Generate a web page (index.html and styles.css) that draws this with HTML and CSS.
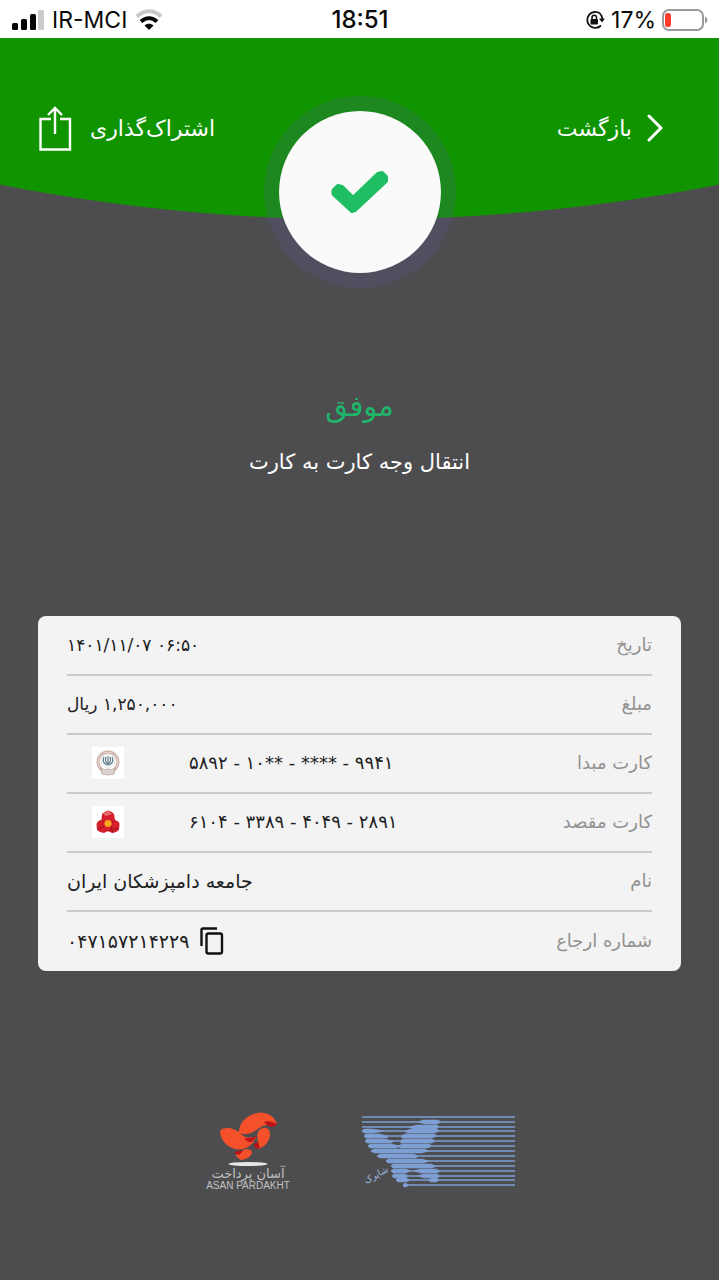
FILE: index.html
```html
<!DOCTYPE html>
<html lang="fa" dir="rtl">
<head>
<meta charset="utf-8">
<meta name="viewport" content="width=device-width, initial-scale=1">
<title>انتقال وجه کارت به کارت</title>
<link rel="stylesheet" href="styles.css">
</head>
<body>
<div class="status" dir="ltr">
  <div class="status-group">
    <svg width="32" height="20" viewBox="0 0 32 20" aria-hidden="true">
      <g fill="#050505"><rect x="0" y="13" width="6" height="7" rx="1.5"/><rect x="9" y="9" width="6" height="11" rx="1.5"/><rect x="18" y="4" width="6" height="16" rx="1.5"/></g>
      <rect x="26" y="0" width="6" height="20" rx="1.5" fill="#cbcbcb"/>
    </svg>
    <span>IR-MCI</span>
    <svg width="28" height="21" viewBox="0 0 28 21" fill="none" aria-hidden="true">
      <path d="M2 7.5C9 .5 19 .5 26 7.5" stroke="#c9c9c9" stroke-width="4"/>
      <path d="M6 12.500C11 8 17 8 22 12.500" stroke="#050505" stroke-width="4"/>
      <path d="M9.500 16.500C12 14 16 14 18.500 16.500L14 21Z" fill="#050505"/>
    </svg>
  </div>
  <time class="clock">18:51</time>
  <div class="status-group status-end">
    <svg width="20" height="20" viewBox="0 0 20 20" fill="none" aria-hidden="true">
      <path d="M15 3.500A8 8 0 1 0 16 15.500" stroke="#111" stroke-width="1.800"/>
      <path d="M15 3.500Q17.300 6 17.300 9" stroke="#111" stroke-width="1.800"/>
      <path d="M14 8.500H20L17 12.500Z" fill="#111"/>
      <rect x="5.500" y="9" width="7.500" height="5.500" rx="1" fill="#111"/>
      <path d="M7 9.500V7.500a2.250 2.250 0 0 1 4.500 0V9.500" stroke="#111" stroke-width="1.500"/>
    </svg>
    <span>17%</span>
    <svg width="46" height="22" viewBox="0 0 46 22" aria-hidden="true">
      <rect x="1" y="1" width="40" height="20" rx="6" fill="none" stroke="#999" stroke-width="2"/>
      <rect x="3" y="4" width="6" height="14" rx="2.500" fill="#fb3b30"/>
      <path d="M43 7.500Q45.500 8.500 45.500 11T43 14.500Z" fill="#999"/>
    </svg>
  </div>
</div>

<header class="hero">
  <button class="action action-back" type="button">
    <svg width="16" height="28" viewBox="0 0 16 28" fill="none" stroke="#fff" stroke-width="3" stroke-linecap="round" stroke-linejoin="round" aria-hidden="true"><path d="M2 2L14 14L2 26"/></svg>
    بازگشت
  </button>
  <div class="badge">
    <svg width="60" height="44" viewBox="0 0 60 44" fill="none" stroke="#20be62" stroke-width="4" stroke-linejoin="round" aria-hidden="true"><path fill="#20be62" d="M3.500 20.500L8 16L12 17L23 28L48 4L52 3L56 7L56 11L25 40L22 41L3.500 24Z"/></svg>
  </div>
  <button class="action action-share" type="button">
    اشتراک‌گذاری
    <svg width="34" height="46" viewBox="0 0 34 46" fill="none" stroke="#fff" stroke-width="2.400" aria-hidden="true"><path d="M13 14H2.500V44.500H32V14H22M17 29V3M10 10L17 3L24 10"/></svg>
  </button>
</header>

<main class="content">
  <h1 class="result">موفق</h1>
  <p class="summary">انتقال وجه کارت به کارت</p>
  <dl class="receipt">
    <div class="row"><dt>تاریخ</dt><dd class="figure" dir="ltr">۱۴۰۱/۱۱/۰۷ ۰۶:۵۰</dd></div>
    <div class="row"><dt>مبلغ</dt><dd class="figure">۱,۲۵۰,۰۰۰ ریال</dd></div>
    <div class="row"><dt>کارت مبدا</dt><dd class="bank" dir="ltr">
      <svg width="32" height="32" viewBox="0 0 32 32" fill="none" aria-hidden="true">
        <path d="M0 0H32V32H0Z" fill="#fff"/>
        <path d="M10 23A10 10 0 1 1 22 23" stroke="#c9aaa0" stroke-width="3"/>
        <path d="M10 23A10 10 0 1 1 22 23" stroke="#eadbd6" stroke-width="1"/>
        <circle cx="16" cy="14" r="7" fill="#fcfcfc" stroke="#d5d5d5" stroke-width=".6"/>
        <path d="M12 10Q9.500 15 14.500 18M20 10Q22.500 15 17.500 18M14 10Q12.500 14 15.500 17M18 10Q19.500 14 16.500 17M16 9V19" stroke="#5e7a85" stroke-width="1.200"/>
        <path d="M9 21Q12 24 16 22Q20 24 23 21L22 27Q16 29 10 27Z" fill="#d9d4d3" stroke="#bfa59c" stroke-width=".8"/>
      </svg>
      <span>۵۸۹۲ - ۱۰** - **** - ۹۹۴۱</span></dd></div>
    <div class="row"><dt>کارت مقصد</dt><dd class="bank" dir="ltr">
      <svg width="32" height="32" viewBox="0 0 32 32" aria-hidden="true">
        <path d="M0 0H32V32H0Z" fill="#fff"/>
        <path d="M10 8Q13 5 16 4.500Q20 5 22 8L23 14Q27 15 27.500 18L27 24Q24 27 20 27L16 25L12 27Q8 27 5 24L4.500 18Q6 14 9.500 14Z" fill="#d5202b"/>
        <path d="M11 8L16 4.500L20 8L14 10Z" fill="#ea6a6d"/>
        <path d="M9.500 14L15 19L6 23M23 14L18 18L21 27M16 25L26 22" fill="none" stroke="#a30f1d"/>
        <circle cx="16" cy="17.500" r="3.600" fill="#fba722"/>
      </svg>
      <span>۶۱۰۴ - ۳۳۸۹ - ۴۰۴۹ - ۲۸۹۱</span></dd></div>
    <div class="row"><dt>نام</dt><dd>جامعه دامپزشکان ایران</dd></div>
    <div class="row"><dt>شماره ارجاع</dt><dd class="reference" dir="ltr"><span>۰۴۷۱۵۷۲۱۴۲۲۹</span>
      <button class="copy" type="button" aria-label="کپی">
        <svg width="24" height="28" viewBox="0 0 24 28" fill="none" stroke="#111" stroke-width="2.400" aria-hidden="true"><path d="M1.500 19V3Q1.500 1.500 3 1.500H17"/><rect x="6.500" y="6.500" width="15.500" height="20" rx="2"/></svg>
      </button></dd></div>
  </dl>
</main>

<footer class="partners" dir="ltr">
  <svg width="88" height="80" viewBox="0 0 88 80" role="img" aria-label="Asan Pardakht">
    <path d="M35 22C34 12 44 2 57 1.500C66 2 71 7 73 13C68 15 63 13 59 15C51 19 46 26 35 22Z" fill="#f4502a"/>
    <path d="M60 11Q67 9 73 13Q71 16 67 16Q63 15 60 11Z" fill="#bd1118"/>
    <path d="M16 21C17 16 29 15 37 23C42 28 46 26 52 26C49 35 40 40 31 38C21 35 17 28 16 21Z" fill="#f4502a"/>
    <path d="M40 27Q46 28 52 25Q49 32 45 31Q42 30 40 27Z" fill="#bd1118"/>
    <path d="M54 38C57 33 51 28 54 21C57 15 66 15 66 23C66 30 61 36 54 38Z" fill="#f4502a"/>
    <path d="M50 33L54 31L56 37Q50 39 50 33Z" fill="#bd1118"/>
    <path d="M31 44C35 44 38 38 43 38C53 39 46 48 38 49C35 49 34 46 31 44Z" fill="#f4502a"/>
    <path d="M30 42Q34 39 39 40L35 44Z" fill="#bd1118"/>
    <ellipse cx="44" cy="53" rx="19.500" ry="2" fill="#e7e7e7"/>
    <text class="asan-fa" x="44" y="67" text-anchor="middle" direction="rtl">آسان پرداخت</text>
    <text class="asan-en" x="44" y="78" text-anchor="middle">ASAN PARDAKHT</text>
  </svg>
  <svg class="shaparak" width="154" height="72" viewBox="0 0 154 72" fill="none" role="img" aria-label="شاپرک">
    <g stroke="#7e9fd3" stroke-width="1.700">
      <path d="M0 2H153M0 7H153M0 12H153M0 16H153M2 21H153M3 26H153M6 31H153M9 36H153M15 41H153M24 46H153M29 51H153M29 56H153M30 61H153M34 65H153M41 70H153"/>
    </g>
    <g fill="#7e9fd3" stroke="#7e9fd3" stroke-width=".6">
      <path d="M56 7L61 5H76L79 7L75 9H63ZM47 12L55 10H75L77 12L74 14H51ZM43 16L49 14H75L77 16L73 18H45ZM39 21L43 19H72L75 21L70 23H40ZM38 26L41 24H70L73 26L70 28H39ZM36 31L40 29H67L70 31L66 33H38ZM9 36L12 34H63L66 36L60 38H12ZM15 41L18 39H52L56 41L54 43H18ZM24 46L26 44H60L67 46L62 48H26ZM29 51L31 49H69L74 51L70 53H31ZM29 56L31 54H44L49 56L44 58H31ZM30 61L32 59H42L47 61L43 63H32ZM34 65L36 63H44L48 65L44 67H36ZM41 70L43 68L47 70L44 72H42Z"/>
      <path d="M0 16L2 14H10L22 16L12 18H2ZM2 21L4 19H18L25 21L26 23H4ZM3 26L5 24H22L32 26L29 28H5ZM6 31L8 29H29L38 31L34 33H8ZM52 56L58 54H74L78 56L75 58H59ZM56 61L61 59H75L78 61L75 63H62ZM66 65L71 63H75L77 65L74 67H69Z"/>
    </g>
    <text class="shaparak-name" x="14" y="63" text-anchor="middle" direction="rtl" transform="rotate(-30 14 60)">شاپرک</text>
  </svg>
</footer>
</body>
</html>
```
FILE: styles.css
```css
* { box-sizing: border-box; }

body {
  margin: 0;
  min-height: 100vh;
  display: flex;
  flex-direction: column;
  background: #4d4d4f;
  color: #fff;
  font-family: "DejaVu Sans", sans-serif;
}

button {
  padding: 0;
  border: 0;
  background: none;
  color: inherit;
  font: inherit;
  cursor: pointer;
}

svg { display: block; flex: none; }

.status {
  display: grid;
  grid-template-columns: 1fr auto 1fr;
  align-items: center;
  height: 38px;
  padding: 1px 11px 0 12px;
  background: #fff;
  color: #0a0a0a;
  font-family: Inter, sans-serif;
  font-size: 23px;
}

.status-group { display: flex; align-items: center; gap: 8px; }
.status-end { justify-content: flex-end; gap: 6px; }
.clock { font-size: 24px; font-weight: 500; }

.hero {
  display: grid;
  grid-template-columns: 1fr auto 1fr;
  align-items: start;
  padding: 58px 38px 0;
  background: radial-gradient(circle at 50% -1687px, #109400 1868px, transparent 1869px);
}

.action {
  display: flex;
  align-items: center;
  gap: 15px;
  height: 48px;
  margin-top: 8px;
  font-size: 22px;
}

.action-back { padding-inline-start: 18px; }
.action-share { justify-self: end; gap: 18px; }

.badge {
  display: grid;
  place-items: center;
  width: 192px;
  height: 192px;
  border: 15px solid rgba(92, 92, 160, .2);
  border-radius: 50%;
  background: #fafafa;
  background-clip: padding-box;
}

.content { padding: 94px 38px 0; text-align: center; }

.result {
  margin: 0;
  color: #1fb56a;
  font-size: 29px;
  font-weight: 400;
  line-height: 48px;
}

.summary { margin: 16px 0 0; font-size: 21px; line-height: 32px; }

.receipt {
  margin: 138px 0 0;
  padding: 1px 29px 0;
  border-radius: 8px;
  background: #f3f3f3;
  color: #202022;
  font-size: 19px;
}

.row {
  display: flex;
  align-items: center;
  justify-content: space-between;
  height: 59px;
  padding-bottom: 2px;
  border-bottom: 2px solid #cacaca;
}

.row:last-child { border-bottom: 0; }
.row dt { color: #929292; font-size: 18px; }
.row dd { margin: 0; }
.row .figure { font-size: 17px; }

.row .bank {
  display: flex;
  align-items: center;
  gap: 65px;
  margin-right: auto;
  padding-left: 25px;
  font-size: 18px;
}

.row .reference { display: flex; align-items: center; gap: 11px; }

.partners {
  display: flex;
  align-items: center;
  justify-content: center;
  gap: 70px;
  margin-top: auto;
  padding: 40px 20px 89px;
}

.asan-fa { fill: #c0c0c0; font-size: 13px; }
.asan-en { fill: #c0c0c0; font-family: "Liberation Sans", sans-serif; font-size: 10px; }
.shaparak { overflow: visible; }
.shaparak-name { fill: #9eb8df; font-size: 9px; }
```
